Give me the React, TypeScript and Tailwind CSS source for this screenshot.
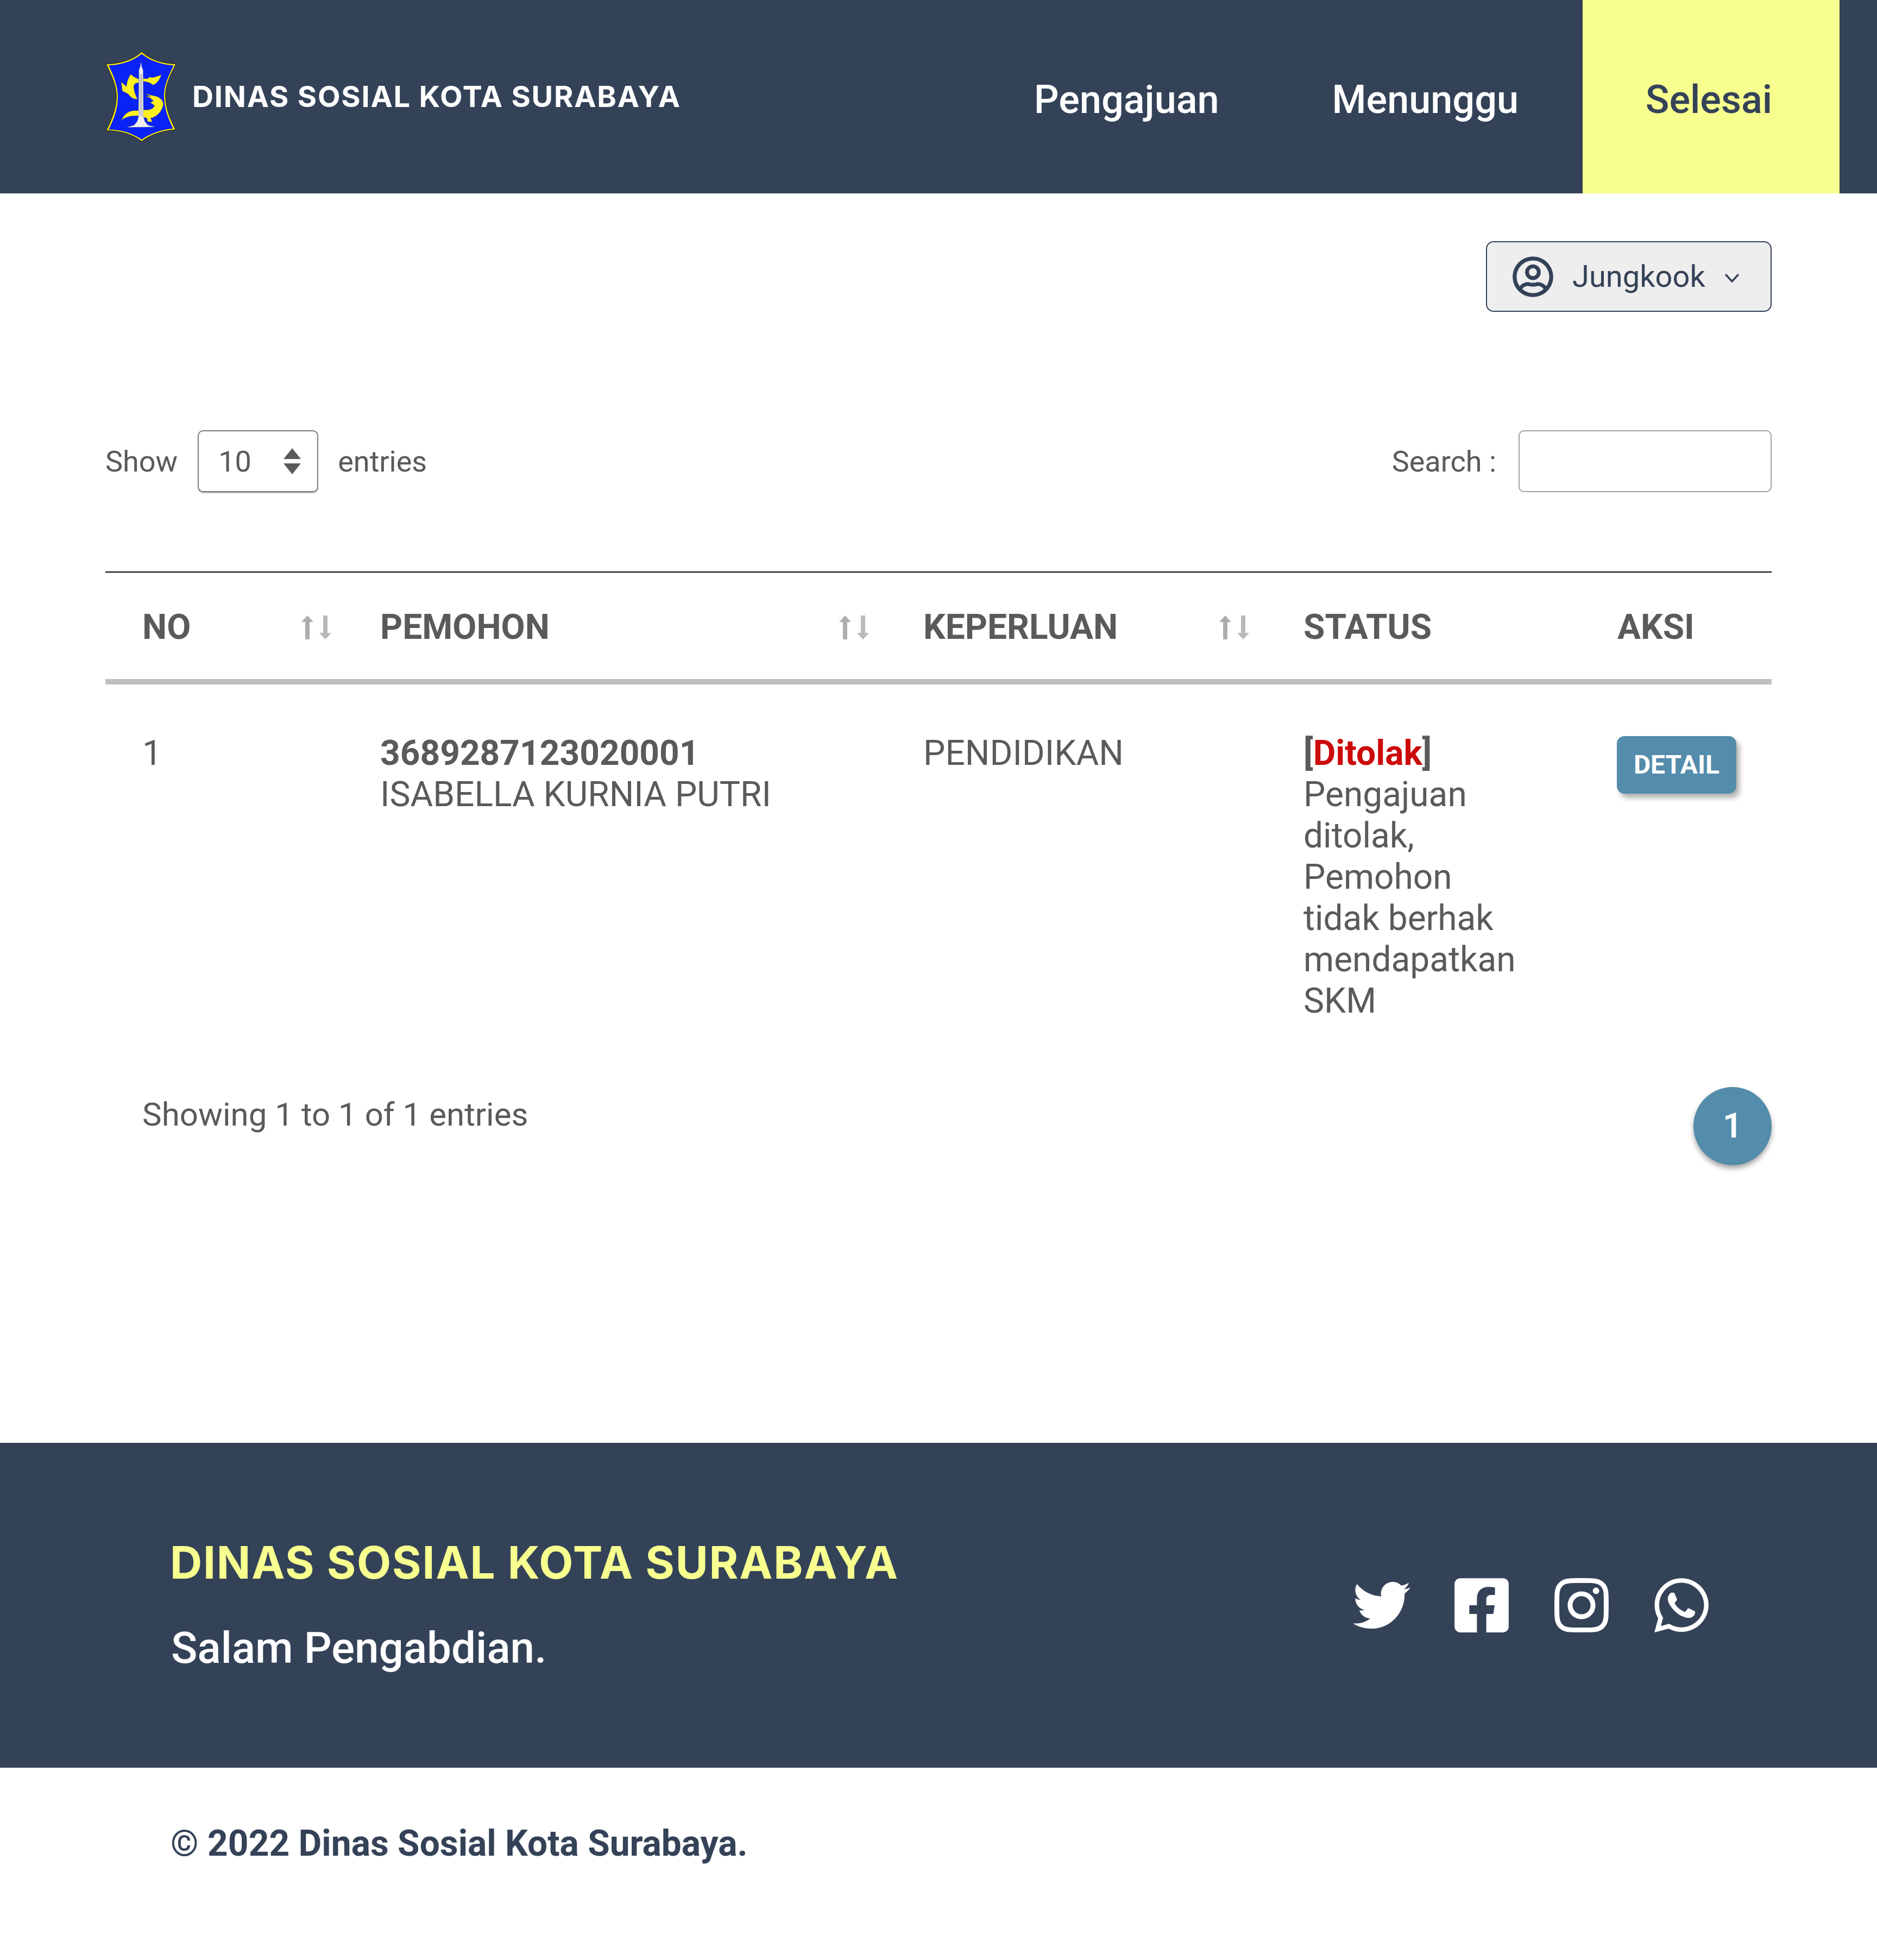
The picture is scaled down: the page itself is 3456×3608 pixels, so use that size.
import { FaTwitter, FaFacebookSquare, FaInstagram, FaWhatsapp, FaRegUserCircle } from "react-icons/fa";

function Logo() {
  return (
    <svg viewBox="100 100 392 502" className="w-[131px] h-[167px] shrink-0">
      <path d="M300 104 C345 145 410 170 490 171 C455 240 430 290 432 350 C434 420 455 470 488 535 C410 540 345 565 300 600 C255 565 190 540 104 540 C135 475 160 420 160 350 C160 290 135 240 103 172 C190 170 255 145 300 104Z" fill="#ffee00" stroke="#1a1a1a" strokeWidth="3" />
      <path d="M300 116 C345 152 408 176 477 179 C445 245 423 295 424 350 C426 420 446 470 474 529 C405 534 345 558 300 590 C255 558 195 534 117 534 C148 472 168 420 168 350 C168 295 148 245 117 179 C195 176 255 152 300 116Z" fill="#0a22f5" />
      <path d="M240 228 C248 238 258 244 285 256 L285 276 C268 272 255 285 256 300 C258 325 268 345 276 365 C258 368 240 358 228 340 C215 328 200 328 192 318 C192 300 188 285 186 272 C196 278 206 288 216 296 C218 270 226 250 240 228Z" fill="#ffee22" stroke="#4a4a10" strokeWidth="1" />
      <path d="M308 250 C325 256 338 254 345 243 C352 252 385 242 410 231 C400 255 385 285 360 287 C352 276 330 268 308 268Z" fill="#ffee22" stroke="#4a4a10" strokeWidth="1" />
      <path d="M318 335 L365 347 C395 350 420 370 420 395 C415 430 385 465 350 470 L358 492 L332 490 L330 472 L308 465 L308 425 C340 430 365 420 372 402 L348 385 L366 376 L345 358 L322 352 L350 350Z" fill="#ffee22" stroke="#4a4a10" strokeWidth="1" />
      <path d="M284 430 C240 425 205 440 190 482 C215 460 250 458 284 458Z" fill="#ffee22" stroke="#4a4a10" strokeWidth="1" />
      <path d="M296 158 L300 185 L308 205 L308 225 L310 465 L318 490 L335 510 L375 520 L218 522 L258 510 L275 490 L282 465 L285 225 L285 205 L292 185Z" fill="#f0f0f0" stroke="#555" strokeWidth="1" />
      <path d="M292 228 L291 462 M300 228 L301 462" stroke="#9a9a9a" strokeWidth="4" fill="none" />
    </svg>
  );
}

function SortIcon() {
  return (
    <svg viewBox="0 0 55 44" className="w-[55px] h-[44px] shrink-0">
      <path d="M11 0 L22 12 L15 12 L15 44 L7 44 L7 12 L0 12Z" fill="#adadad" />
      <path d="M40 0 L48 0 L48 32 L55 32 L44 44 L33 32 L40 32Z" fill="#b9b9b9" />
    </svg>
  );
}

export default function App() {
  return (
    <div className="w-[3456px] h-[3608px] bg-white flex flex-col font-['Roboto',sans-serif] text-[#5a5a5a]">
      <header className="h-[356px] bg-[#344258] flex items-stretch justify-between pl-[194px] pr-[69px] shrink-0">
        <div className="flex items-center gap-[29px] pb-[2px]">
          <Logo />
          <span className="font-['Inter',sans-serif] font-bold text-[54px] tracking-[1.8px] text-white">DINAS SOSIAL KOTA SURABAYA</span>
        </div>
        <nav className="flex items-stretch text-[72px] font-medium">
          <a className="flex items-center pt-[12px] px-[104px] text-white">Pengajuan</a>
          <a className="flex items-center pt-[12px] pl-[104px] pr-[118px] text-white">Menunggu</a>
          <a className="flex items-center justify-center pt-[12px] pr-[8px] w-[473px] bg-[#f7ff8f] text-[#344258]">Selesai</a>
        </nav>
      </header>

      <main className="flex-1 px-[194px] flex flex-col">
        <div className="flex justify-end mt-[88px]">
          <button className="w-[526px] h-[130px] rounded-[14px] border-[2px] border-[#344258] bg-[#eeeeee] flex items-center pl-[46px] text-[#344258] text-[56px]">
            <FaRegUserCircle className="w-[77px] h-[77px] shrink-0" />
            <span className="ml-[34px]">Jungkook</span>
            <svg viewBox="0 0 28 18" className="ml-[35px] w-[28px] h-[18px] mt-[6px]" fill="none" stroke="#344258" strokeWidth="3.5" strokeLinecap="round" strokeLinejoin="round">
              <path d="M3 3 L14 15 L25 3" />
            </svg>
          </button>
        </div>

        <div className="flex items-center justify-between mt-[218px] h-[114px] text-[54px]">
          <div className="flex items-center">
            <span>Show</span>
            <div className="ml-[37px] w-[222px] h-[114px] rounded-[10px] border-[2px] border-[#7a7a7a] shadow-[0_2px_0_#bbbbbb] flex items-center justify-between pl-[36px] pr-[30px]">
              <span>10</span>
              <svg viewBox="0 0 32 48" className="w-[32px] h-[48px]" fill="#5a5a5a">
                <path d="M16 0 L32 20 L0 20Z" />
                <path d="M0 28 L32 28 L16 48Z" />
              </svg>
            </div>
            <span className="ml-[36px]">entries</span>
          </div>
          <div className="flex items-center">
            <span>Search :</span>
            <div className="ml-[41px] w-[466px] h-[114px] rounded-[10px] border-[2px] border-[#a0a0a0]" />
          </div>
        </div>

        <table className="mt-[146px] w-[3068px] table-fixed border-collapse">
          <colgroup>
            <col className="w-[438px]" />
            <col className="w-[1000px]" />
            <col className="w-[700px]" />
            <col className="w-[578px]" />
            <col className="w-[352px]" />
          </colgroup>
          <thead>
            <tr className="h-[202px] text-[64px] border-t-[2px] border-t-black border-b-[10px] border-b-[#bfbfbf]">
              <th className="pl-[68px] pr-[22px] pt-[6px] font-bold text-left">
                <div className="flex items-center justify-between"><span>NO</span><SortIcon /></div>
              </th>
              <th className="pl-[68px] pr-[32px] pt-[6px] font-bold text-left">
                <div className="flex items-center justify-between"><span>PEMOHON</span><SortIcon /></div>
              </th>
              <th className="pl-[68px] pr-[32px] pt-[6px] font-bold text-left">
                <div className="flex items-center justify-between"><span>KEPERLUAN</span><SortIcon /></div>
              </th>
              <th className="pl-[68px] pt-[6px] font-bold text-left">STATUS</th>
              <th className="pl-[68px] pt-[6px] font-bold text-left">AKSI</th>
            </tr>
          </thead>
          <tbody>
            <tr className="text-[64px] leading-[76px] align-top">
              <td className="pl-[68px] pt-[89px] pb-[38px]">1</td>
              <td className="pl-[68px] pt-[89px]">
                <div className="font-bold">3689287123020001</div>
                <div>ISABELLA KURNIA PUTRI</div>
              </td>
              <td className="pl-[68px] pt-[89px]">PENDIDIKAN</td>
              <td className="pl-[68px] pr-[100px] pt-[89px]">
                <span className="font-bold">[<span className="text-[#cc0a0a]">Ditolak</span>]</span>
                <br />
                Pengajuan ditolak, Pemohon tidak berhak mendapatkan SKM
              </td>
              <td className="pl-[67px] pt-[95px]">
                <button className="w-[220px] h-[106px] rounded-[14px] bg-[#548cab] text-white text-[48px] font-bold shadow-[6px_8px_10px_rgba(0,0,0,0.3)]">DETAIL</button>
              </td>
            </tr>
          </tbody>
        </table>

        <div className="flex justify-between items-start mt-[120px] pl-[68px]">
          <span className="text-[60px] mt-[6px]">Showing 1 to 1 of 1 entries</span>
          <div className="w-[144px] h-[144px] rounded-full bg-[#548cab] text-white text-[64px] font-semibold flex items-center justify-center shadow-[0_6px_10px_rgba(0,0,0,0.35)]">1</div>
        </div>
      </main>

      <footer className="shrink-0">
        <div className="h-[598px] bg-[#344258] flex items-center justify-between pl-[313px] pr-[303px]">
          <div className="flex flex-col">
            <span className="font-['Inter',sans-serif] font-bold text-[82px] leading-[96px] text-[#f7ff8f] tracking-[1.8px]">DINAS SOSIAL KOTA SURABAYA</span>
            <span className="text-[80px] leading-[94px] font-medium text-white mt-[62px] pl-[2px]">Salam Pengabdian.</span>
          </div>
          <div className="flex items-center gap-[70px] text-white">
            <FaTwitter className="w-[106px] h-[106px] mx-[4px]" />
            <FaFacebookSquare className="w-[114px] h-[114px]" />
            <FaInstagram className="w-[114px] h-[114px]" />
            <FaWhatsapp className="w-[114px] h-[114px]" />
          </div>
        </div>
        <div className="h-[354px] pl-[314px] pt-[91px] text-[65.85px] font-bold text-[#344258]">© 2022 Dinas Sosial Kota Surabaya.</div>
      </footer>
    </div>
  );
}
